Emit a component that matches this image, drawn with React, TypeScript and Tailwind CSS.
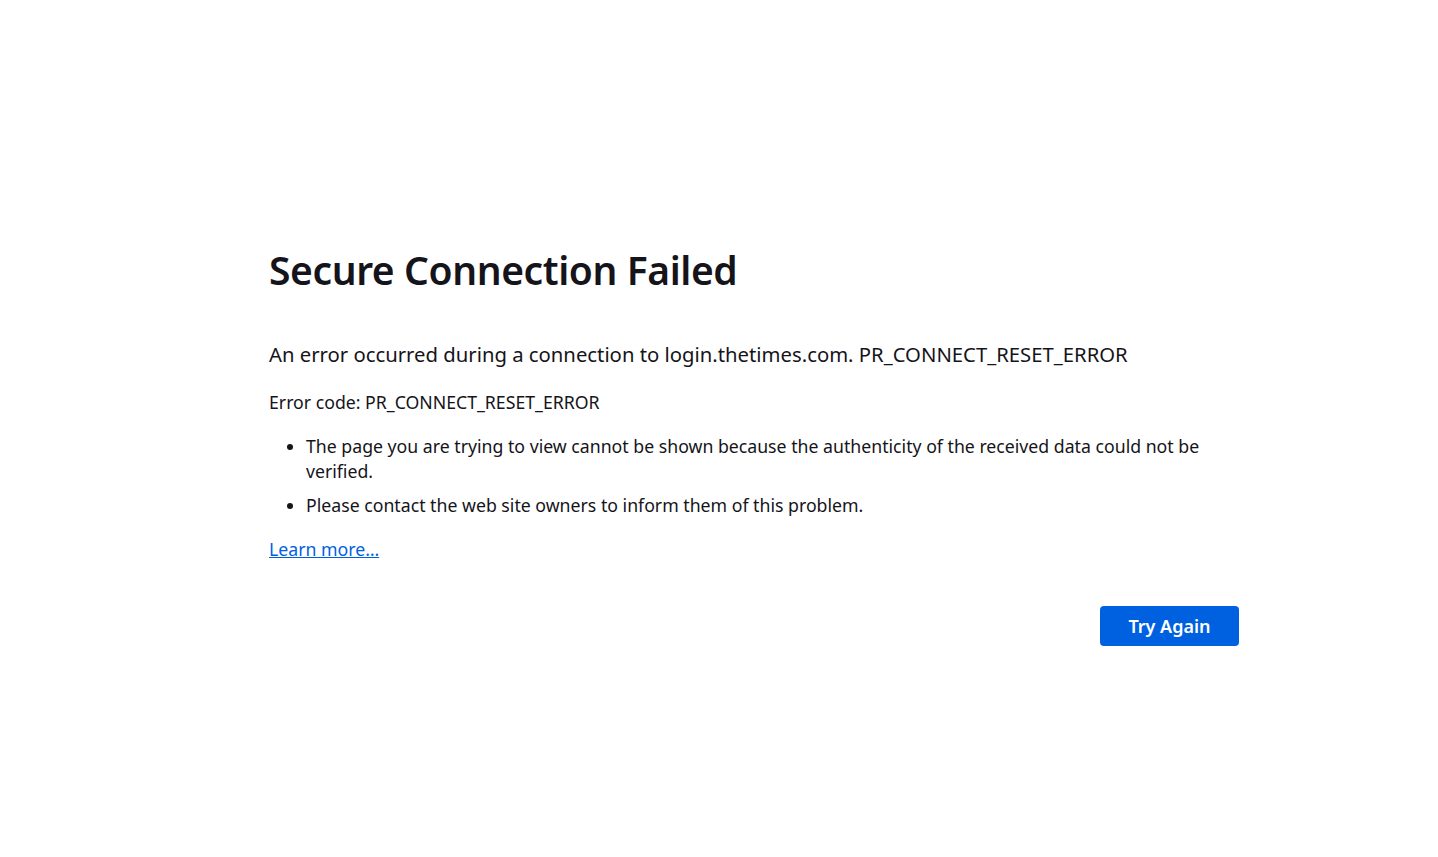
export default function App() {
  return (
    <div className="min-h-screen bg-white text-[#15141a] font-['Noto_Sans',sans-serif]">
      <div className="mx-auto w-[1040px] pl-[70px] pt-[242px]">
        {/* title */}
        <h1 className="text-[39px] font-semibold leading-[56px] tracking-[-0.4px]">Secure Connection Failed</h1>

        {/* intro */}
        <p className="mt-[42px] text-[20.3px] leading-[28px]">
          An error occurred during a connection to login.thetimes.com. PR_CONNECT_RESET_ERROR
        </p>
        <p className="mt-[22px] text-[17.7px] leading-[24px]">Error code: PR_CONNECT_RESET_ERROR</p>

        <ul className="mt-[20px] pl-[37px] list-disc text-[17.7px] leading-[25px]">
          <li>
            The page you are trying to view cannot be shown because the authenticity of the received data could not be verified.
          </li>
          <li className="mt-[9px]">Please contact the web site owners to inform them of this problem.</li>
        </ul>

        <a href="#" className="mt-[19px] block w-fit text-[17.7px] leading-[25px] text-[#0061e0] underline">
          Learn more…
        </a>

        <div className="mt-[44px] flex justify-end">
          <button className="h-[40px] w-[139px] rounded-[4px] bg-[#0061e0] text-[18px] font-semibold text-white">
            Try Again
          </button>
        </div>
      </div>
    </div>
  );
}
